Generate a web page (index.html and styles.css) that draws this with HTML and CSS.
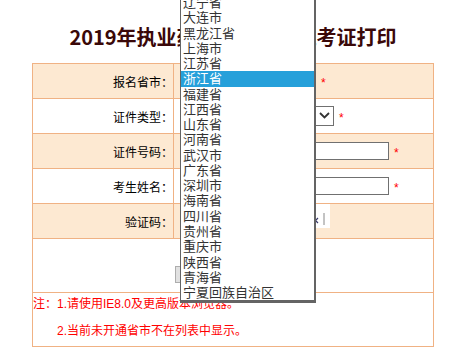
FILE: index.html
```html
<!DOCTYPE html>
<html lang="zh-CN">
<head>
  <meta charset="UTF-8">
  <title>2019年执业药师资格考试准考证打印</title>
  <link rel="stylesheet" href="styles.css">
</head>
<body>
  <div class="wrap">
    <h1>2019年执业药师资格考试准考证打印</h1>

    <table class="form">
      <tr class="shade">
        <td class="label">报名省市：</td>
        <td class="field">
          <div class="line">
            <span class="sel sel-prov">
              <select><option>浙江省</option></select>
              <svg class="arrow" viewBox="0 0 11 7"><polyline points="1,1 5.5,5.5 10,1" /></svg>
            </span>
            <span class="must">*</span>
          </div>
        </td>
      </tr>
      <tr>
        <td class="label">证件类型：</td>
        <td class="field">
          <div class="line">
            <span class="sel sel-type">
              <select><option>身份证</option></select>
              <svg class="arrow" viewBox="0 0 11 7"><polyline points="1,1 5.5,5.5 10,1" /></svg>
            </span>
            <span class="must">*</span>
          </div>
        </td>
      </tr>
      <tr class="shade">
        <td class="label">证件号码：</td>
        <td class="field">
          <div class="line">
            <input class="txt" type="text">
            <span class="must">*</span>
          </div>
        </td>
      </tr>
      <tr>
        <td class="label">考生姓名：</td>
        <td class="field">
          <div class="line">
            <input class="txt" type="text">
            <span class="must">*</span>
          </div>
        </td>
      </tr>
      <tr class="shade">
        <td class="label">验证码：</td>
        <td class="field field-top">
          <div class="line">
            <input class="txt code" type="text">
            <span class="captcha">
              <svg viewBox="0 0 75 24">
                <path d="M58 14 L63 19 M63 14 L58 19" stroke="#3a3a6a" stroke-width="1.2" fill="none" />
                <path d="M69 9 L69 21" stroke="#888" stroke-width="1" />
                <path d="M20 6 L26 18 M34 8 L40 17" stroke="#999" stroke-width="1" />
              </svg>
            </span>
          </div>
        </td>
      </tr>
      <tr>
        <td class="actions" colspan="2">
          <button type="button">打印准考证</button>
        </td>
      </tr>
      <tr>
        <td class="notes" colspan="2">
          <div class="note">注：1.请使用IE8.0及更高版本浏览器。</div>
          <div class="note indent">2.当前未开通省市不在列表中显示。</div>
        </td>
      </tr>
    </table>
  </div>

  <div class="dropdown">
    <div>辽宁省</div>
    <div>大连市</div>
    <div>黑龙江省</div>
    <div>上海市</div>
    <div>江苏省</div>
    <div class="on">浙江省</div>
    <div>福建省</div>
    <div>江西省</div>
    <div>山东省</div>
    <div>河南省</div>
    <div>武汉市</div>
    <div>广东省</div>
    <div>深圳市</div>
    <div>海南省</div>
    <div>四川省</div>
    <div>贵州省</div>
    <div>重庆市</div>
    <div>陕西省</div>
    <div>青海省</div>
    <div>宁夏回族自治区</div>
  </div>
</body>
</html>
```

FILE: styles.css
```css
body {
  margin: 0;
  background: #fff;
  font-family: "Liberation Sans", "Noto Sans CJK SC", sans-serif;
  font-size: 12px;
  color: #000;
}
.wrap {
  width: 402px;
  margin-left: 32px;
}
h1 {
  margin: 0;
  padding: 27px 0 16px;
  font-family: "Noto Sans CJK SC", sans-serif;
  font-size: 20px;
  line-height: 20px;
  font-weight: bold;
  text-align: center;
  color: #3a0808;
}
.form {
  width: 402px;
  border-collapse: collapse;
}
.form td {
  border: 1px solid #f0b284;
  padding: 0;
  height: 34px;
}
.form tr.shade td {
  background: #fde9d2;
}
.label {
  width: 140px;
  text-align: right;
  padding-right: 1px;
}
.form td.field {
  padding-left: 6px;
}
.form td.field-top {
  vertical-align: top;
}
.line {
  display: flex;
  align-items: center;
  gap: 5px;
}
.sel {
  position: relative;
  display: block;
}
.sel select {
  display: block;
  appearance: none;
  margin: 0;
  height: 20px;
  border: 1px solid #707070;
  background: #fff;
  color: #fff;
  font-size: 12px;
}
.sel-prov select {
  width: 136px;
}
.sel-type select {
  width: 154px;
}
.sel .arrow {
  position: absolute;
  right: 4px;
  top: 6px;
  width: 11px;
  height: 7px;
  fill: none;
  stroke: #333;
  stroke-width: 1.8;
}
.must {
  color: #f00;
  font-size: 12px;
  line-height: 12px;
  padding-top: 4px;
}
.txt {
  box-sizing: border-box;
  width: 209px;
  height: 18px;
  margin: 0;
  padding: 0;
  border: 1px solid #707070;
  background: #fff;
}
.txt.code {
  width: 64px;
  margin-top: 3px;
}
.captcha {
  display: block;
  width: 75px;
  height: 24px;
  background: #fff;
  margin-left: 6px;
}
.captcha svg {
  display: block;
  width: 75px;
  height: 24px;
}
.form td.actions {
  height: 53px;
  text-align: center;
  vertical-align: top;
}
.actions button {
  margin-top: 27px;
  width: 116px;
  height: 17px;
  padding: 0;
  border: 1px solid #adadad;
  background: #e1e1e1;
  font-family: inherit;
  font-size: 12px;
  line-height: 15px;
}
.form td.notes {
  height: auto;
  padding: 1px 0 5px;
  color: #f00;
}
.note {
  line-height: 20px;
}
.note.indent {
  padding-left: 24px;
  margin-top: 7px;
}
.dropdown {
  position: absolute;
  left: 180px;
  top: -5px;
  width: 133px;
  background: #fff;
  border-left: 1px solid #646464;
  border-right: 2px solid #646464;
  border-bottom: 3px solid #646464;
  font-size: 13px;
  color: #333;
}
.dropdown div {
  height: 15.28px;
  line-height: 15.28px;
  padding-left: 2px;
  white-space: nowrap;
}
.dropdown .on {
  background: #26a0da;
  color: #fff;
}
```
